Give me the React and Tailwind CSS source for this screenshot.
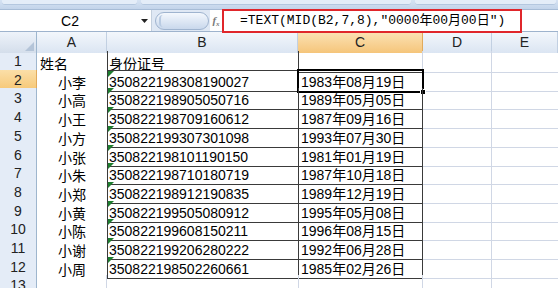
import React from "react";

const rows = [
  ["小李", "350822198308190027", "1983年08月19日"],
  ["小高", "350822198905050716", "1989年05月05日"],
  ["小王", "350822198709160612", "1987年09月16日"],
  ["小方", "350822199307301098", "1993年07月30日"],
  ["小张", "350822198101190150", "1981年01月19日"],
  ["小朱", "350822198710180719", "1987年10月18日"],
  ["小郑", "350822198912190835", "1989年12月19日"],
  ["小黄", "350822199505080912", "1995年05月08日"],
  ["小陈", "350822199608150211", "1996年08月15日"],
  ["小谢", "350822199206280222", "1992年06月28日"],
  ["小周", "350822198502260661", "1985年02月26日"],
];

const heights = [19, 18, 19, 19, 19, 18, 19, 19, 18, 19, 19, 18, 19];
const font = { fontFamily: '"Liberation Sans", "Noto Sans CJK SC", sans-serif' };

function Triangle() {
  return (
    <svg className="absolute left-0 top-0" width="6" height="6" viewBox="0 0 6 6">
      <polygon points="0,0 6,0 0,6" fill="#1e7d2f" />
    </svg>
  );
}

export default function App() {
  return (
    <div className="w-[558px] h-[288px] overflow-hidden bg-white text-[14px] text-black" style={font}>
      {/* ribbon strip */}
      <div className="h-[10px] bg-gradient-to-b from-[#d6e3f3] to-[#c3d4ea] flex items-start gap-[4px] px-[2px] border-b border-[#a7bcd6]">
        <div className="h-[5px] w-[135px] rounded-b-[3px] bg-[#e4edf8] border-b border-[#b4c7df]" />
        <div className="h-[5px] w-[270px] rounded-b-[3px] bg-[#e4edf8] border-b border-[#b4c7df]" />
        <div className="h-[5px] flex-1 rounded-b-[3px] bg-[#e4edf8] border-b border-[#b4c7df]" />
      </div>
      {/* formula bar */}
      <div className="h-[22px] flex items-stretch bg-[#dfe8f4] border-b border-[#9eb3cd]">
        <div className="w-[152px] bg-white border-r border-[#c3cfdd] flex items-center relative">
          <span className="w-[140px] text-center text-[14px] leading-none">C2</span>
          <svg className="absolute left-[141px] top-[9px]" width="7" height="4" viewBox="0 0 7 4">
            <polygon points="0,0 7,0 3.5,4" fill="#222" />
          </svg>
        </div>
        <div className="w-[58px] flex items-center pl-[3px]">
          <div className="h-[18px] w-[54px] rounded-full bg-gradient-to-b from-[#f4f8fd] to-[#c9d8ec] border border-[#9fb4cf] flex items-center pl-[3px]">
            <div className="h-[12px] w-[8px] rounded-full border-l-2 border-[#b9cbe2]" />
          </div>
        </div>
        <div className="w-[12px] bg-white flex items-center justify-center">
          <span className="italic text-[11px] font-bold text-[#7a7a7a]" style={{ fontFamily: '"Liberation Serif", serif' }}>f<sub className="text-[7px]">x</sub></span>
        </div>
        <div className="flex-1 bg-white relative flex items-center">
          <div className="absolute left-0 top-[-1px] w-[300px] h-[24px] border-[2.5px] border-[#e0262b]" />
          <span className="pl-[18px] text-[13px] whitespace-pre" style={{ fontFamily: '"Liberation Mono", "Noto Sans CJK SC", monospace' }}>
            =TEXT(MID(B2,7,8),"0000年00月00日")
          </span>
        </div>
      </div>
      {/* column headers */}
      <div className="grid grid-cols-[37px_70px_191px_125px_69px_1fr] h-[19px] border-b border-[#9eb6ce]" style={{ fontFamily: '"Liberation Sans", sans-serif' }}>
        <div className="relative bg-gradient-to-b from-[#eef3fa] to-[#d4deeb] border-r border-[#9eb6ce]">
          <svg className="absolute right-[2px] bottom-[2px]" width="9" height="9" viewBox="0 0 9 9">
            <polygon points="9,0 9,9 0,9" fill="#b4c4d8" />
          </svg>
        </div>
        {["A", "B", "C", "D", "E"].map((c) => (
          <div
            key={c}
            className={
              "flex items-center justify-center text-[14px] border-r " +
              (c === "C"
                ? "bg-gradient-to-b from-[#fbe2b4] to-[#f5c57a] border-[#e1aa5c] text-[#222]"
                : "bg-gradient-to-b from-[#f3f7fc] to-[#dbe5f2] border-[#c2d0e2] text-[#222]")
            }
          >
            {c}
          </div>
        ))}
      </div>
      {/* rows */}
      {heights.map((h, i) => {
        const r = i + 1;
        const data = r >= 2 && r <= 12 ? rows[r - 2] : null;
        const bordered = !!data;
        return (
          <div key={r} className="grid grid-cols-[37px_70px_191px_125px_69px_1fr]" style={{ height: h }}>
            <div
              className={
                "flex items-center justify-center border-r border-b text-[14px] text-[#222] " +
                (r === 2
                  ? "bg-gradient-to-b from-[#fbdfa8] to-[#f6c672] border-[#e1aa5c]"
                  : "bg-[#e4ecf7] border-[#9eb6ce]")
              }
              style={{ fontFamily: '"Liberation Sans", sans-serif' }}
            >
              {r}
            </div>
            {/* A */}
            <div
              className={
                "flex items-end leading-[17px] " +
                (r === 13 ? "border-r border-b border-[#d0d7e5]" : "") +
                (r === 1 ? " pl-[3px]" : " justify-center")
              }
            >
              {r === 1 ? "姓名" : data ? data[0] : ""}
            </div>
            {/* B */}
            <div
              className={
                "relative flex items-end leading-[17px] pl-[1px] " +
                (bordered
                  ? "border-l border-b border-[#3a3a3a]" + (r === 2 ? " border-t" : "")
                  : r === 1
                  ? "border-l border-[#3a3a3a]"
                  : "border-b border-[#d0d7e5]")
              }
            >
              {data && <Triangle />}
              {r === 1 ? "身份证号" : data ? data[1] : ""}
            </div>
            {/* C */}
            <div
              className={
                "relative flex items-end leading-[17px] pl-[2px] " +
                (bordered
                  ? "border-l border-r border-b border-[#3a3a3a]" + (r === 2 ? " border-t" : "")
                  : r === 1
                  ? "border-l border-b border-[#3a3a3a] border-r-[#d0d7e5] border-r"
                  : "border-l border-r border-b border-[#d0d7e5]")
              }
            >
              {data ? data[2] : ""}
              {r === 2 && (
                <>
                  <div className="absolute left-[-2px] top-[-2px] right-[-2px] bottom-[-2px] border-2 border-black pointer-events-none" />
                  <div className="absolute right-[-4px] bottom-[-4px] w-[6px] h-[6px] bg-black border border-white" />
                </>
              )}
            </div>
            <div className="border-r border-b border-[#d0d7e5]" />
            <div className="border-b border-[#d0d7e5]" />
          </div>
        );
      })}
    </div>
  );
}
